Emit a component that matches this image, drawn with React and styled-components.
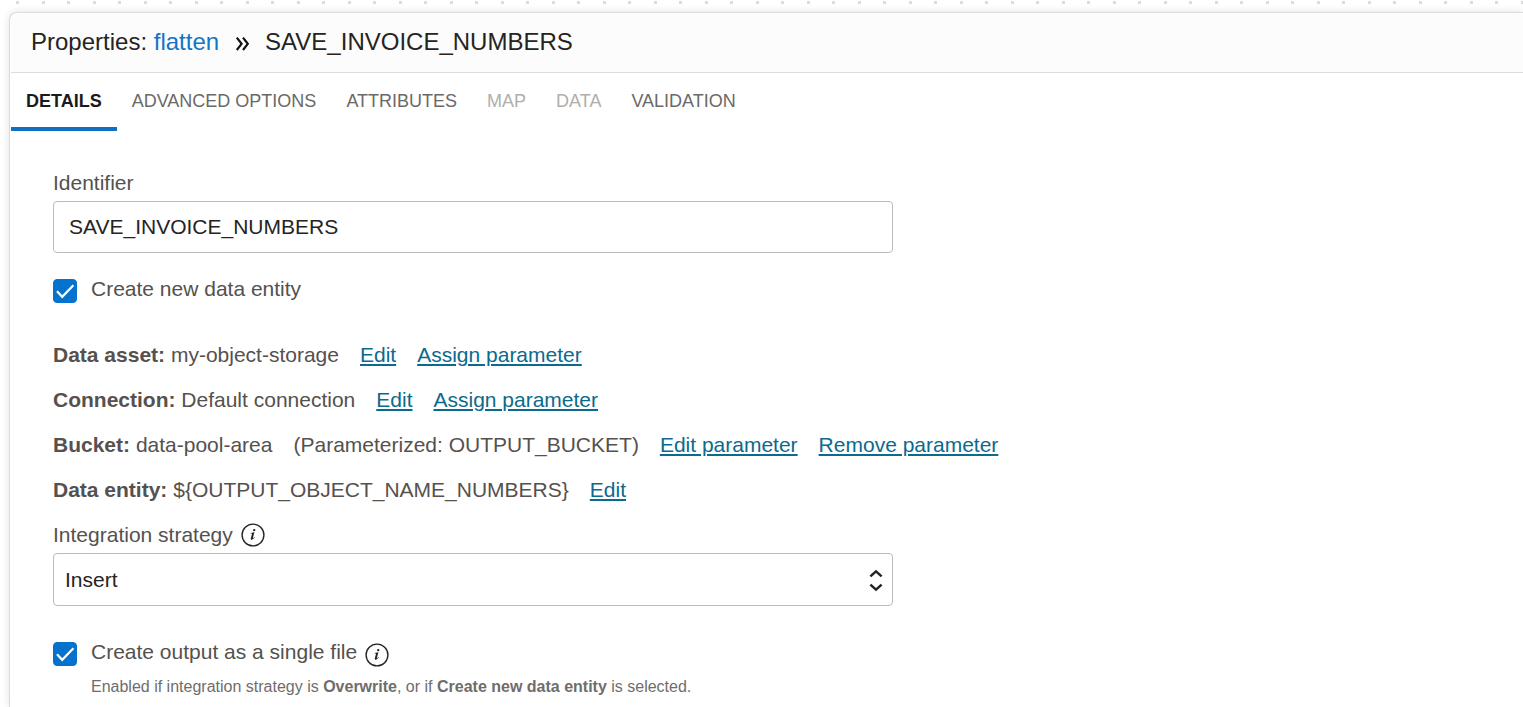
import React, { useState } from "react";
import styled, { createGlobalStyle } from "styled-components";

const GlobalStyle = createGlobalStyle`
  *, *::before, *::after { box-sizing: border-box; }
  body {
    margin: 0;
    font-family: "Liberation Sans", Arial, sans-serif;
    font-size: 21px;
    line-height: 24px;
    color: #55514e;
    background: #fff;
  }
`;

const Canvas = styled.div`
  display: flex;
  flex-direction: column;
  min-height: 100vh;
  padding: 12px 0 0 9px;
  overflow: hidden;
  background: linear-gradient(
      90deg,
      transparent 16px,
      #dcdcdc 16px 19px,
      transparent 19px 42px,
      #dcdcdc 42px 45px,
      transparent 45px
    )
    0 1px / 51px 3px repeat-x;
`;

const Panel = styled.section`
  flex: 1;
  padding-left: 1px;
  background: #fff;
  border: solid #dcdcdc;
  border-width: 1px 0 0 1px;
  border-top-left-radius: 8px;
  box-shadow: 0 0 8px rgba(0, 0, 0, 0.12);
`;

const Header = styled.header`
  display: flex;
  align-items: center;
  height: 60px;
  padding: 0 20px 2px;
  background: #fcfcfc;
  border-bottom: 1px solid #dcdcdc;
  border-top-left-radius: 8px;
`;

const Title = styled.h1`
  display: flex;
  align-items: center;
  margin: 0;
  font-size: 24px;
  font-weight: 400;
  line-height: 28px;
  color: #262423;
  white-space: pre;
`;

const Crumb = styled.a`
  color: #1474c8;
  text-decoration: none;
`;

const CrumbIcon = styled.svg`
  width: 16px;
  height: 16px;
  margin: 4px 14px 0 16px;
`;

const Tabs = styled.nav`
  display: flex;
`;

const Tab = styled.button`
  height: 58px;
  padding: 2px 15px 0;
  border: 0;
  border-bottom: 4px solid ${(p) => (p.$active ? "#0f6fc0" : "transparent")};
  background: none;
  font: ${(p) => (p.$active ? 700 : 400)} 18px/24px "Liberation Sans", Arial, sans-serif;
  color: ${(p) => (p.$active ? "#1c1a19" : "#6b6967")};
  &:disabled { color: #b0aeac; }
`;

const Form = styled.form`
  display: flex;
  flex-direction: column;
  padding: 40px 42px 4px;
`;

const Field = styled.div`
  display: flex;
  flex-direction: column;
  gap: 6px;
  width: 100%;
  max-width: 840px;
`;

const LabelRow = styled.div`
  display: flex;
  align-items: center;
  gap: 8px;
`;

const TextInput = styled.input`
  height: 52px;
  padding: 0 15px;
  border: 1px solid #bcbbba;
  border-radius: 4px;
  background: #fff;
  font: inherit;
  color: #262423;
`;

const SelectBox = styled.div`
  display: grid;
  align-items: center;
`;

const Select = styled.select`
  grid-area: 1 / 1;
  appearance: none;
  width: 100%;
  height: 53px;
  padding: 0 40px 0 11px;
  border: 1px solid #bcbbba;
  border-radius: 4px;
  background: #fff;
  font: inherit;
  color: #262423;
`;

const SelectIcon = styled.svg`
  grid-area: 1 / 1;
  justify-self: end;
  width: 16px;
  height: 24px;
  margin-right: 9px;
  pointer-events: none;
`;

const CheckRow = styled.div`
  display: flex;
  align-items: flex-start;
  gap: 14px;
  margin: ${(p) => p.$margin};
`;

const CheckBox = styled.span`
  display: grid;
  flex: none;
  margin-top: 2px;
`;

const CheckInput = styled.input`
  grid-area: 1 / 1;
  appearance: none;
  width: 24px;
  height: 24px;
  margin: 0;
  border: 1px solid #0572ce;
  border-radius: 4px;
  background: ${(p) => (p.checked ? "#0572ce" : "#fff")};
`;

const CheckMark = styled.svg`
  grid-area: 1 / 1;
  width: 24px;
  height: 24px;
  pointer-events: none;
`;

const CheckText = styled.div`
  display: flex;
  flex-direction: column;
  gap: 11px;
`;

const Help = styled.p`
  margin: 0;
  font-size: 16px;
  color: #6f6d6b;
`;

const Facts = styled.div`
  display: flex;
  flex-direction: column;
  gap: 21px;
  margin-bottom: 21px;
`;

const Fact = styled.div`
  display: flex;
  flex-wrap: wrap;
  column-gap: 21px;
`;

const Link = styled.a`
  color: #0b6a8d;
  text-decoration: underline;
  text-decoration-thickness: 2px;
  text-underline-offset: 2px;
`;

const InfoButton = styled.button`
  display: flex;
  margin: ${(p) => (p.$low ? "3px 0 -3px" : "0")};
  padding: 0;
  border: 0;
  background: none;
`;

function Info({ label, low }) {
  return (
    <InfoButton type="button" aria-label={label} $low={low}>
      <svg width="24" height="24" viewBox="0 0 24 24" fill="#262423">
        <circle cx="12" cy="12" r="10.9" fill="none" stroke="#262423" strokeWidth="1.4" />
        <path d="M9.6 9.9 L13.4 9.2 L11.9 14.9 C11.8 15.4 12.2 15.3 13.5 13.9 L13.9 14.3 C12.6 16 11.6 16.7 10.7 16.7 C9.9 16.7 9.6 16.1 9.8 15.2 L11 10.9 C11.1 10.5 10.8 10.4 9.6 10.5 Z" />
        <circle cx="13.2" cy="7.1" r="1.2" />
      </svg>
    </InfoButton>
  );
}

function Check({ id }) {
  const [on, setOn] = useState(true);
  return (
    <CheckBox>
      <CheckInput id={id} type="checkbox" checked={on} onChange={() => setOn(!on)} />
      <CheckMark viewBox="0 0 24 24" fill="none" stroke="#fff" strokeWidth="2.2">
        <path d="M4 12.3 L9.2 17.8 L20.4 6.2" />
      </CheckMark>
    </CheckBox>
  );
}

const tabs = [
  { name: "DETAILS", active: true },
  { name: "ADVANCED OPTIONS" },
  { name: "ATTRIBUTES" },
  { name: "MAP", disabled: true },
  { name: "DATA", disabled: true },
  { name: "VALIDATION" },
];

const facts = [
  { name: "Data asset:", value: "my-object-storage", links: ["Edit", "Assign parameter"] },
  { name: "Connection:", value: "Default connection", links: ["Edit", "Assign parameter"] },
  {
    name: "Bucket:",
    value: "data-pool-area",
    note: "(Parameterized: OUTPUT_BUCKET)",
    links: ["Edit parameter", "Remove parameter"],
  },
  { name: "Data entity:", value: "${OUTPUT_OBJECT_NAME_NUMBERS}", links: ["Edit"] },
];

export default function App() {
  return (
    <Canvas>
      <GlobalStyle />
      <Panel>
        <Header>
          <Title>
            <span>Properties: <Crumb href="#flatten">flatten</Crumb></span>
            <CrumbIcon viewBox="0 0 16 16" fill="none" stroke="#111" strokeWidth="2.2" aria-hidden="true">
              <path d="M1.8 1.6 L6.6 7.8 L1.8 14 M8 1.6 L12.8 7.8 L8 14" />
            </CrumbIcon>
            <span>SAVE_INVOICE_NUMBERS</span>
          </Title>
        </Header>
        <Tabs>
          {tabs.map((t) => (
            <Tab key={t.name} type="button" $active={t.active} disabled={t.disabled}>
              {t.name}
            </Tab>
          ))}
        </Tabs>
        <Form>
          <Field>
            <label htmlFor="identifier">Identifier</label>
            <TextInput id="identifier" defaultValue="SAVE_INVOICE_NUMBERS" />
          </Field>
          <CheckRow $margin="24px 0 40px">
            <Check id="new-entity" />
            <label htmlFor="new-entity">Create new data entity</label>
          </CheckRow>
          <Facts>
            {facts.map((f) => (
              <Fact key={f.name}>
                <span><b>{f.name}</b> {f.value}</span>
                {f.note && <span>{f.note}</span>}
                {f.links.map((l) => (
                  <Link key={l} href="#edit">{l}</Link>
                ))}
              </Fact>
            ))}
          </Facts>
          <Field>
            <LabelRow>
              <label htmlFor="strategy">Integration strategy</label>
              <Info label="About integration strategy" />
            </LabelRow>
            <SelectBox>
              <Select id="strategy" defaultValue="Insert">
                <option>Insert</option>
                <option>Overwrite</option>
              </Select>
              <SelectIcon viewBox="0 0 16 24" fill="none" stroke="#262423" strokeWidth="2.5" aria-hidden="true">
                <path d="M2.4 8.4 L8 3.4 L13.6 8.4 M2.4 16.6 L8 21.6 L13.6 16.6" />
              </SelectIcon>
            </SelectBox>
          </Field>
          <CheckRow $margin="34px 0 0">
            <Check id="single-file" />
            <CheckText>
              <LabelRow>
                <label htmlFor="single-file">Create output as a single file</label>
                <Info label="About single file output" low />
              </LabelRow>
              <Help>
                Enabled if integration strategy is <b>Overwrite</b>, or if <b>Create new data entity</b> is selected.
              </Help>
            </CheckText>
          </CheckRow>
        </Form>
      </Panel>
    </Canvas>
  );
}
